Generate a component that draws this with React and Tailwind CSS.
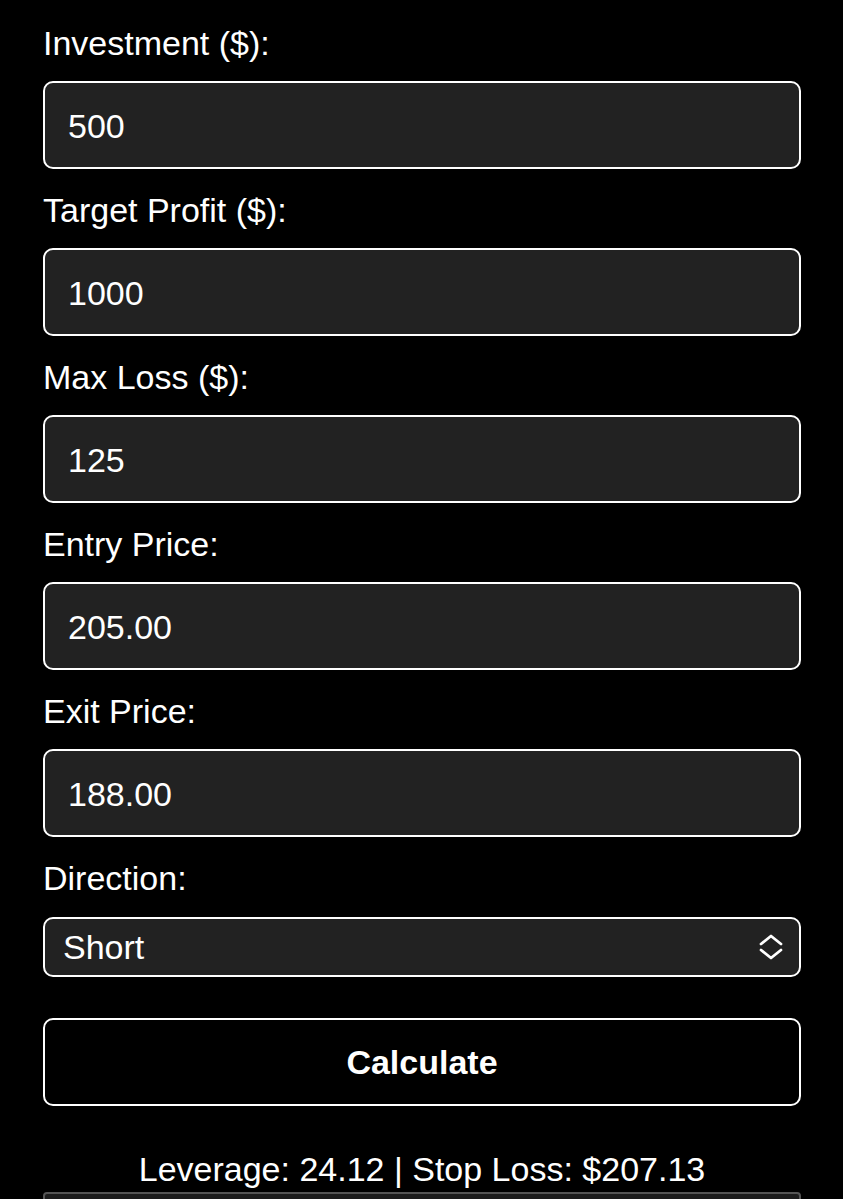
import React, { useState } from 'react';

const fields = [
  { id: 'investment', label: 'Investment ($):', value: '500' },
  { id: 'target', label: 'Target Profit ($):', value: '1000' },
  { id: 'maxLoss', label: 'Max Loss ($):', value: '125' },
  { id: 'entry', label: 'Entry Price:', value: '205.00' },
  { id: 'exit', label: 'Exit Price:', value: '188.00' },
];

const App = () => {
  const [values, setValues] = useState(
    Object.fromEntries(fields.map(f => [f.id, f.value]))
  );
  const [direction, setDirection] = useState('Short');

  return (
    <div
      className="h-[1199px] bg-black text-white pl-[43px] pr-[42px] pt-[23px] overflow-hidden"
      style={{ fontFamily: '"Liberation Sans", Arial, sans-serif' }}
    >
      {fields.map(field => (
        <div key={field.id} className="mb-[21px]">
          <label htmlFor={field.id} className="block text-[34px] leading-[40px] mb-[18px]">
            {field.label}
          </label>
          <input
            id={field.id}
            type="text"
            value={values[field.id]}
            onChange={(e) => setValues({ ...values, [field.id]: e.target.value })}
            className="block w-full h-[88px] pt-[3px] px-[23px] text-[34px] text-white bg-[#222222] border-2 border-white rounded-[10px] outline-none"
          />
        </div>
      ))}

      <div>
        <label htmlFor="direction" className="block text-[34px] leading-[40px] mb-[19px]">
          Direction:
        </label>
        <div className="relative">
          <select
            id="direction"
            value={direction}
            onChange={(e) => setDirection(e.target.value)}
            className="block w-full h-[60px] pl-[18px] pr-[60px] text-[34px] text-white bg-[#222222] border-2 border-white rounded-[10px] appearance-none outline-none"
          >
            <option value="Long">Long</option>
            <option value="Short">Short</option>
          </select>
          <svg
            className="absolute right-[17px] top-1/2 -translate-y-1/2 pointer-events-none"
            width="26"
            height="28"
            viewBox="0 0 26 28"
            fill="none"
            stroke="white"
            strokeWidth="2.8"
            strokeLinecap="round"
            strokeLinejoin="round"
          >
            <path d="M3 11 L13 3 L23 11" />
            <path d="M3 17 L13 25 L23 17" />
          </svg>
        </div>
      </div>

      <button className="block w-full h-[88px] mt-[41px] text-[34px] font-bold text-white bg-black border-2 border-white rounded-[10px]">
        Calculate
      </button>

      <p className="text-center text-[34px] leading-[40px] mt-[43px]">
        Leverage: 24.12 | Stop Loss: $207.13
      </p>

      <div className="mt-[3px] h-[120px] bg-[#1c1c1c] border-2 border-[#555555] rounded-[4px]" />
    </div>
  );
};

export default App;
